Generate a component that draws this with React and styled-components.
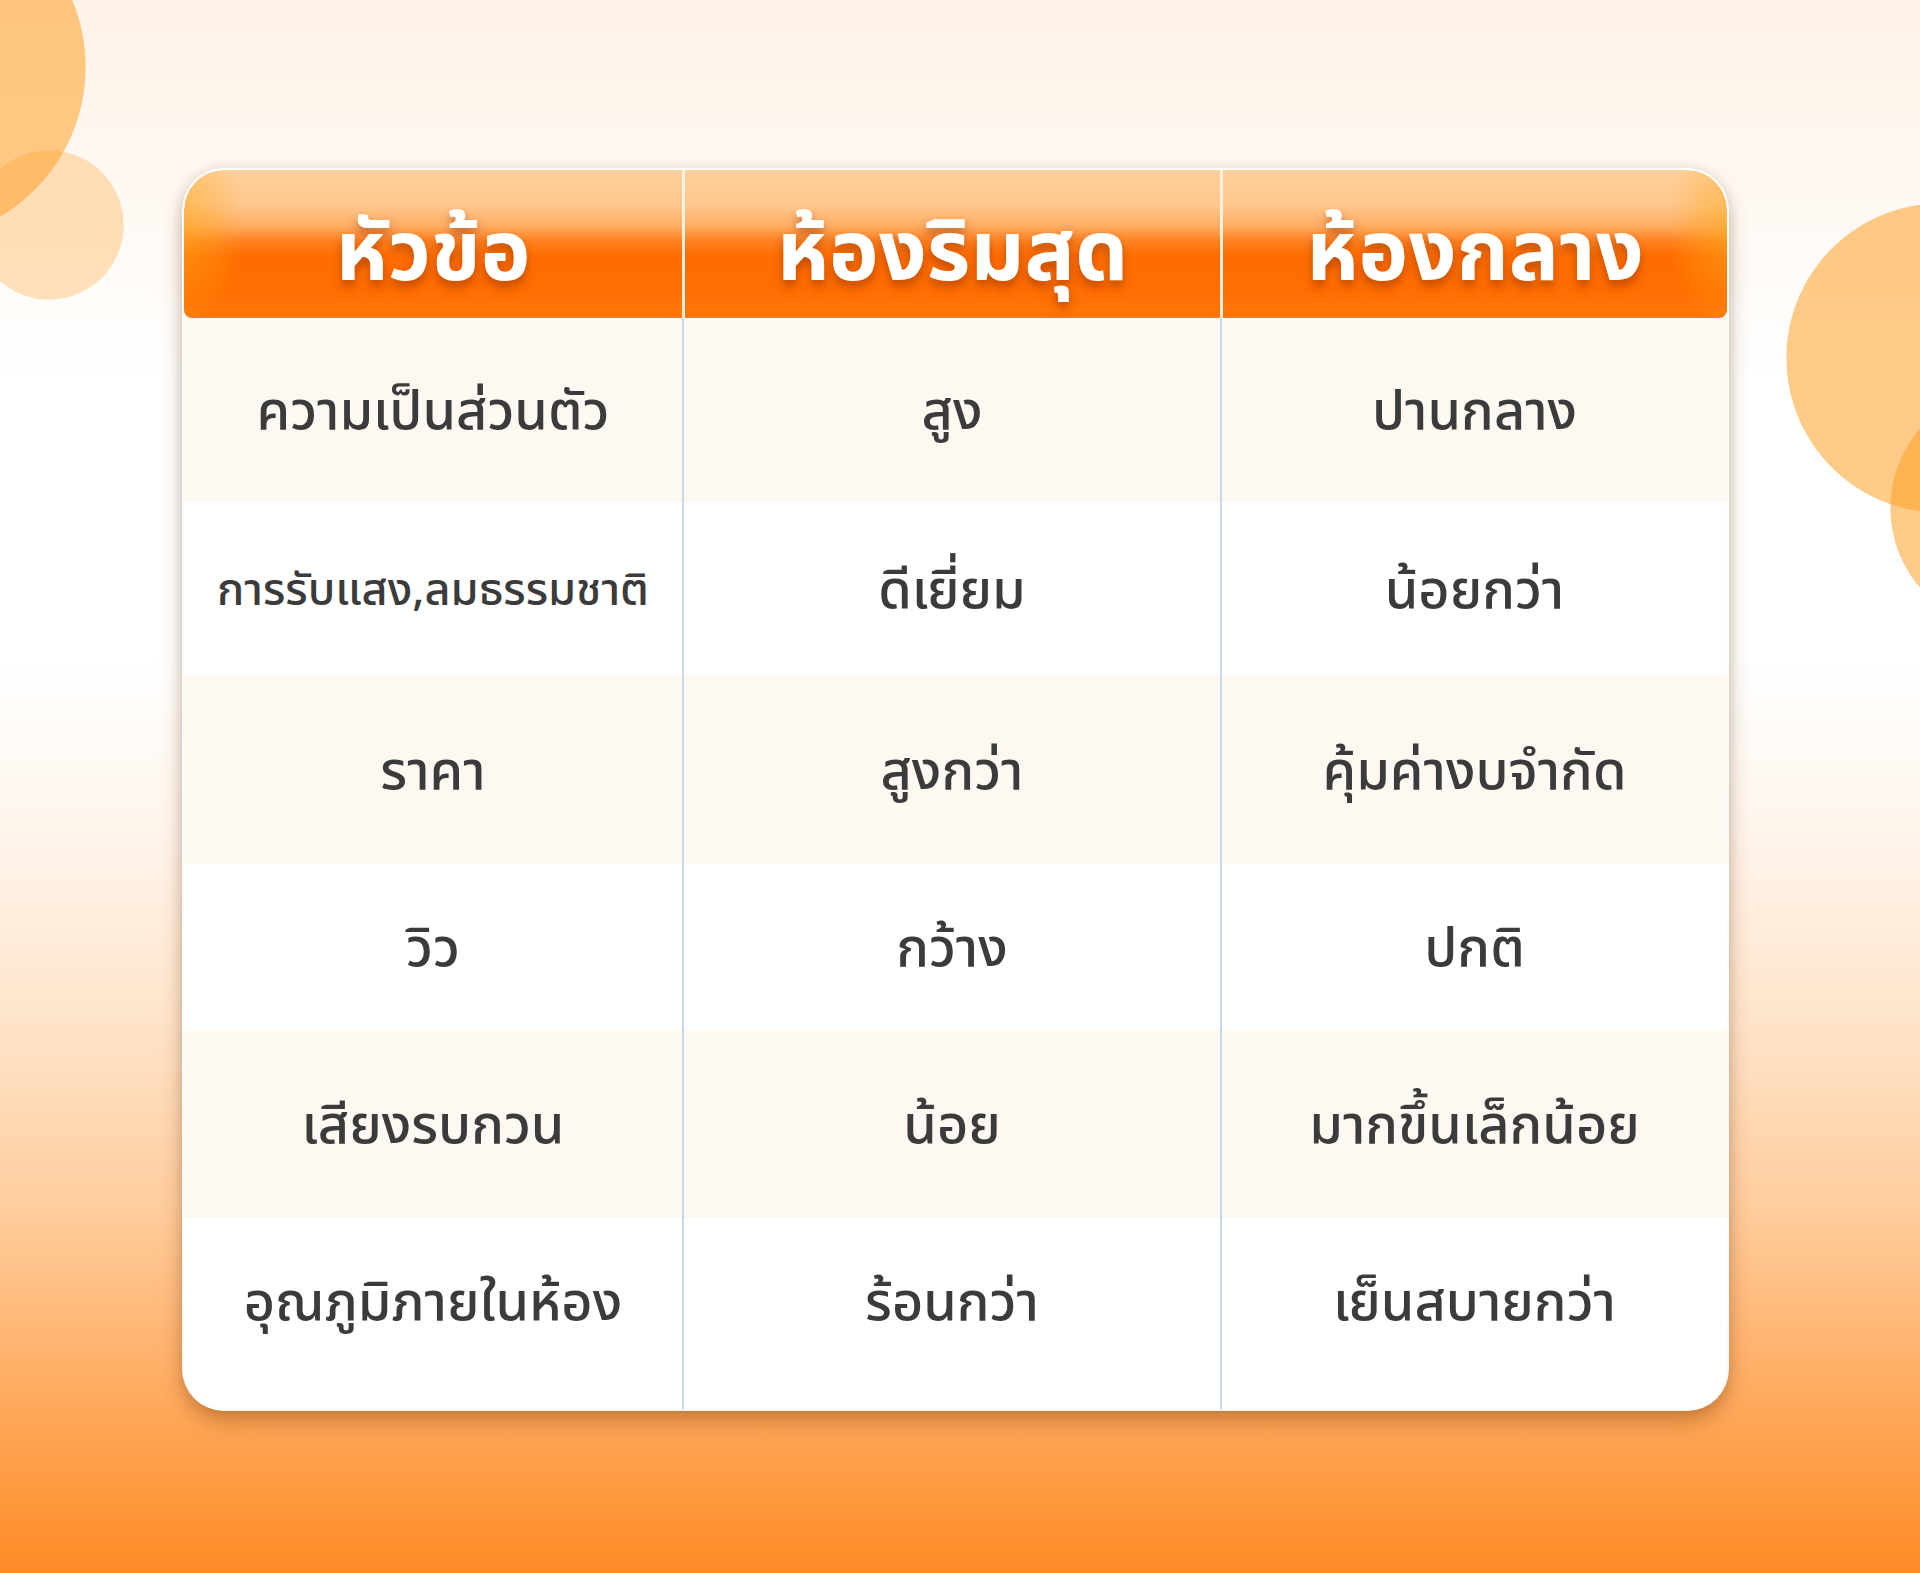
import React from "react";
import styled, { createGlobalStyle } from "styled-components";

const Global = createGlobalStyle`
  html, body { margin: 0; padding: 0; }
  body { font-family: "Noto Sans Thai", "Noto Sans Thai Looped", "Noto Sans", sans-serif; }
`;

const bubble = (cx, cy, r, a) =>
  `radial-gradient(circle ${r}px at ${cx}px ${cy}px, rgba(255, 160, 40, ${a}) ${r - 0.8}px, rgba(255, 160, 40, 0) ${r}px)`;

const Page = styled.div`
  width: 1920px;
  height: 1573px;
  overflow: hidden;
  box-sizing: border-box;
  padding: 170px 0 0 184px;
  background:
    ${bubble(-88, 67, 174, 0.55)},
    ${bubble(49, 225, 75, 0.3)},
    ${bubble(1941, 358, 155, 0.55)},
    ${bubble(2012, 508, 122, 0.55)},
    linear-gradient(
      180deg,
      #fff3e8 0%,
      #fff9f4 14%,
      #ffffff 24%,
      #ffffff 42%,
      #fff5ec 53%,
      #ffe4ca 65%,
      #ffcc9c 77%,
      #ffaa5e 89%,
      #ff8b25 100%
    );
`;

const Card = styled.div`
  width: 1543px;
  border-radius: 40px;
  background: #ffffff;
  overflow: hidden;
  box-shadow: 0 0 0 2px rgba(255, 255, 255, 0.95), 0 0 14px rgba(0, 0, 0, 0.12),
    0 12px 22px rgba(120, 60, 10, 0.38);
`;

const HeaderRow = styled.div`
  display: grid;
  grid-template-columns: 498px 538px 507px;
  height: 148px;
  border-radius: 40px 40px 8px 8px;
  overflow: hidden;
  background:
    radial-gradient(ellipse 60px 100px at 0% 40%, rgba(255, 170, 30, 0.6), rgba(255, 170, 30, 0) 100%),
    radial-gradient(ellipse 60px 100px at 100% 40%, rgba(255, 170, 30, 0.6), rgba(255, 170, 30, 0) 100%),
    linear-gradient(
      180deg,
      #ffd09c 0%,
      #ffc78e 24%,
      #ffac62 38%,
      #ff8120 48%,
      #ff6d00 58%,
      #ff6e00 82%,
      #ff780a 100%
    );
`;

const HeaderCell = styled.div`
  display: flex;
  align-items: center;
  justify-content: center;
  color: #ffffff;
  font-size: 84px;
  font-weight: 700;
  line-height: 1;
  padding-top: 22px;
  text-shadow: 0 6px 10px rgba(140, 45, 0, 0.5);
  border-left: ${(p) => (p.$divider ? "3px solid rgba(255, 243, 230, 0.95)" : "none")};
`;

const BodyRow = styled.div`
  display: grid;
  grid-template-columns: 498px 538px 507px;
  height: ${(p) => p.$h}px;
  background: ${(p) => (p.$alt ? "#fef8f3" : "#ffffff")};
`;

const Cell = styled.div`
  display: flex;
  align-items: center;
  justify-content: center;
  color: #3b3b3b;
  font-size: ${(p) => (p.$small ? 45 : 54)}px;
  font-weight: 500;
  line-height: 1;
  white-space: nowrap;
  padding-top: 6px;
  padding-bottom: ${(p) => p.$lift || 0}px;
  border-left: ${(p) => (p.$divider ? "2px solid #c9d9ea" : "none")};
`;

const headers = ["หัวข้อ", "ห้องริมสุด", "ห้องกลาง"];

const rows = [
  { h: 184, cells: ["ความเป็นส่วนตัว", "สูง", "ปานกลาง"] },
  { h: 173, cells: ["การรับแสง,ลมธรรมชาติ", "ดีเยี่ยม", "น้อยกว่า"], small: true },
  { h: 189, cells: ["ราคา", "สูงกว่า", "คุ้มค่างบจำกัด"] },
  { h: 165, cells: ["วิว", "กว้าง", "ปกติ"] },
  { h: 189, cells: ["เสียงรบกวน", "น้อย", "มากขึ้นเล็กน้อย"] },
  { h: 191, cells: ["อุณภูมิภายในห้อง", "ร้อนกว่า", "เย็นสบายกว่า"], lift: 26 },
];

export default function App() {
  return (
    <>
      <Global />
      <Page>
        <Card>
          <HeaderRow>
            {headers.map((t, i) => (
              <HeaderCell key={t} $divider={i > 0}>
                {t}
              </HeaderCell>
            ))}
          </HeaderRow>
          {rows.map((r, ri) => (
            <BodyRow key={ri} $h={r.h} $alt={ri % 2 === 0}>
              {r.cells.map((c, ci) => (
                <Cell
                  key={ci}
                  $divider={ci > 0}
                  $small={r.small && ci === 0}
                  $lift={r.lift}
                >
                  {c}
                </Cell>
              ))}
            </BodyRow>
          ))}
        </Card>
      </Page>
    </>
  );
}
